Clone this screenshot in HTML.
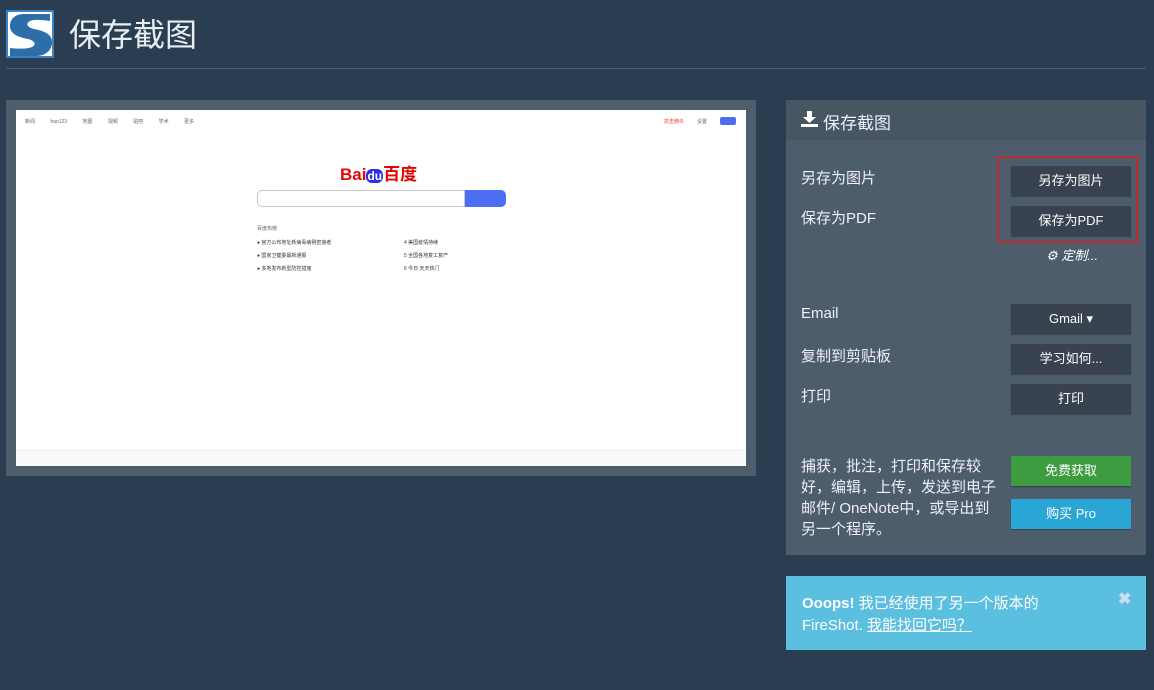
<!DOCTYPE html>
<html><head><meta charset="utf-8"><style>
*{margin:0;padding:0;box-sizing:border-box}
body{width:1154px;height:690px;background:#2b3d50;font-family:"Liberation Sans","Noto Sans CJK SC",sans-serif;position:relative;overflow:hidden;color:#fff}
.abs{position:absolute}
.btn{position:absolute;left:1011px;width:120px;height:30px;background:#39434f;color:#fff;font-size:13px;text-align:center;line-height:30px;box-shadow:0 1px 1px rgba(0,0,0,.3)}
.lbl{position:absolute;left:801px;font-size:15px;color:#eef}
.s{font-size:5px;color:#666;position:absolute}
</style></head><body>
<svg class="abs" style="left:6px;top:10px" width="48" height="48" viewBox="0 0 48 48">
<rect width="48" height="48" fill="#3b82c4"/>
<rect x="2" y="2" width="44" height="44" fill="#fff"/>
<path d="M44 4 H18 C8 4 4 10 4 16 C4 24 12 27 22 29 C30 31 30 35 26 37 C22 39 12 39 4 38 V46 H30 C40 46 46 40 46 32 C46 24 38 21 28 19 C20 17 20 13 24 11 C28 9 38 10 44 11 Z" fill="#2e6ea8"/>
</svg>
<div class="abs" style="left:69px;top:10px;font-size:32px;color:#e8eef4">保存截图</div>
<div class="abs" style="left:6px;top:68px;width:1140px;height:1px;background:#4a5d70"></div>

<div class="abs" style="left:6px;top:100px;width:750px;height:376px;background:#4e5d6c"></div>
<div class="abs" style="left:16px;top:110px;width:730px;height:356px;background:#fff">
<div class="s" style="left:9px;top:8px;word-spacing:14px">新闻 hao123 地图 视频 贴吧 学术 更多</div>
<div class="s" style="left:648px;top:8px;color:#e33">抗击肺炎</div>
<div class="s" style="left:681px;top:8px">设置</div>
<div class="abs" style="left:704px;top:7px;width:16px;height:8px;background:#4e6ef2;border-radius:2px"></div>
<div class="abs" style="left:324px;top:50px;font-size:17px;font-weight:bold;color:#e10602">Bai<span style="background:#2932e1;color:#fff;border-radius:6px;font-size:12px;padding:0 1px">du</span>百度</div>
<div class="abs" style="left:241px;top:80px;width:208px;height:17px;border:1px solid #c4c7ce;border-radius:5px 0 0 5px"></div>
<div class="abs" style="left:449px;top:80px;width:41px;height:17px;background:#4e6ef2;border-radius:0 5px 5px 0"></div>
<div class="s" style="left:241px;top:115px">百度热榜</div>
<div class="s" style="left:241px;top:129px;color:#333">● 官方公布地址新病毒病例密接者</div>
<div class="s" style="left:241px;top:142px;color:#333">● 国家卫健委最新通报</div>
<div class="s" style="left:241px;top:155px;color:#333">● 多地发布新型防控措施</div>
<div class="s" style="left:388px;top:129px;color:#333">4 美国疫情持续</div>
<div class="s" style="left:388px;top:142px;color:#333">5 全国各地复工复产</div>
<div class="s" style="left:388px;top:155px;color:#333">6 今日 天天热门</div>
<div class="abs" style="left:0;top:340px;width:730px;height:16px;background:#fafafa;border-top:1px solid #eee"></div>
</div>

<div class="abs" style="left:786px;top:100px;width:360px;height:455px;background:#4e5d6c"></div>
<div class="abs" style="left:786px;top:100px;width:360px;height:40px;background:#485563"></div>
<svg class="abs" style="left:801px;top:111px" width="17" height="17" viewBox="0 0 17 17"><path d="M6 0h5v6h4l-6.5 6L2 6h4z" fill="#fff"/><rect x="0" y="13" width="17" height="3" fill="#fff"/></svg>
<div class="abs" style="left:823px;top:109px;font-size:17px;color:#eef">保存截图</div>
<div class="lbl" style="top:167px">另存为图片</div>
<div class="lbl" style="top:207px">保存为PDF</div>
<div class="abs" style="left:997px;top:156px;width:141px;height:87px;border:2px solid #c0282f"></div>
<div class="btn" style="top:166px">另存为图片</div>
<div class="btn" style="top:206px">保存为PDF</div>
<div class="abs" style="left:1046px;top:245px;font-size:13px;font-style:italic">⚙ 定制...</div>
<div class="lbl" style="top:305px">Email</div>
<div class="lbl" style="top:345px">复制到剪贴板</div>
<div class="lbl" style="top:385px">打印</div>
<div class="btn" style="top:304px">Gmail ▾</div>
<div class="btn" style="top:344px">学习如何...</div>
<div class="btn" style="top:384px">打印</div>
<div class="lbl" style="top:456px;line-height:21px;white-space:nowrap">捕获，批注，打印和保存较<br>好，编辑，上传，发送到电子<br>邮件/ OneNote中，或导出到<br>另一个程序。</div>
<div class="btn" style="top:456px;background:#3d9c40">免费获取</div>
<div class="btn" style="top:499px;background:#2aa6d6">购买 Pro</div>

<div class="abs" style="left:786px;top:576px;width:360px;height:74px;background:#5bbfe0"></div>
<div class="abs" style="left:802px;top:593px;font-size:15px;line-height:22px;color:#fff"><b>Ooops!</b> 我已经使用了另一个版本的<br>FireShot. <u>我能找回它吗？</u></div>
<div class="abs" style="left:1118px;top:589px;font-size:16px;font-weight:bold;color:#cde">✖</div>
</body></html>
